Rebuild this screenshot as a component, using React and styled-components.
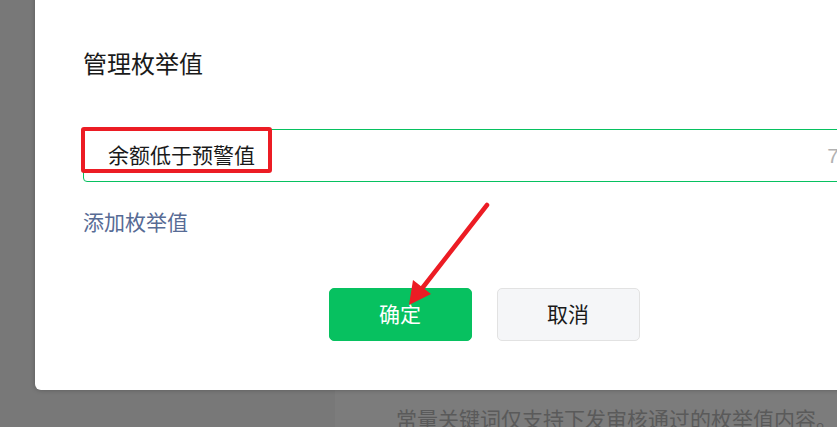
import styled, { createGlobalStyle } from "styled-components";

const GlobalStyle = createGlobalStyle`
  html, body {
    margin: 0;
    padding: 0;
    background: #787878;
  }
  * {
    box-sizing: border-box;
  }
  body {
    font-family: "Noto Sans CJK SC", "Noto Sans", sans-serif;
  }
`;

export default function App() {
  return (
    <>
      <GlobalStyle />
      <Page>
        <Sidebar />
        <Main>
          <Note>常量关键词仅支持下发审核通过的枚举值内容。</Note>
        </Main>

        <Modal role="dialog">
          <Title>管理枚举值</Title>
          <InputWrap>
            <InputText>余额低于预警值</InputText>
            <Counter>7/20</Counter>
            <Highlight />
          </InputWrap>
          <AddLink>添加枚举值</AddLink>
          <Actions>
            <Button $primary>确定</Button>
            <Button>取消</Button>
          </Actions>
        </Modal>

        <Arrow width="837" height="427" viewBox="0 0 837 427">
          <line
            x1="487"
            y1="205"
            x2="420"
            y2="291"
            stroke="#ec1c24"
            strokeWidth="4.5"
            strokeLinecap="round"
          />
          <polygon points="409,305 413,280 431,294" fill="#ec1c24" />
        </Arrow>
      </Page>
    </>
  );
}

const Page = styled.div`
  position: relative;
  display: grid;
  grid-template-columns: 335px 1fr;
  width: 837px;
  height: 427px;
  overflow: hidden;
`;

const Sidebar = styled.div`
  background: #787878;
`;

const Main = styled.div`
  background: #7c7c7c;
  padding: 403px 0 0 61px;
`;

const Note = styled.p`
  margin: 0;
  font-size: 21px;
  line-height: 30px;
  white-space: nowrap;
  color: #5a5a5a;
`;

const Modal = styled.div`
  position: absolute;
  top: -24px;
  left: 35px;
  width: 900px;
  display: flex;
  flex-direction: column;
  padding: 70px 48px 49px;
  background: #fff;
  border-radius: 6px;
  box-shadow: 0 0 5px rgba(0, 0, 0, 0.25);
`;

const Title = styled.h2`
  margin: 0;
  font-size: 24px;
  font-weight: 400;
  line-height: 34px;
  color: #1a1a1a;
`;

const InputWrap = styled.div`
  position: relative;
  display: flex;
  align-items: center;
  justify-content: space-between;
  height: 53px;
  margin-top: 49px;
  padding: 0 18px 0 24px;
  border: 1px solid #07c160;
  border-radius: 4px;
`;

const InputText = styled.span`
  font-size: 21px;
  color: #1a1a1a;
  margin-top: -4px;
`;

const Counter = styled.span`
  font-family: "Liberation Sans", "Noto Sans", sans-serif;
  font-size: 21px;
  color: #b2b2b2;
`;

const Highlight = styled.div`
  position: absolute;
  left: -3px;
  top: -3px;
  width: 191px;
  height: 46px;
  border: 4px solid #ec1c24;
  border-radius: 3px;
`;

const AddLink = styled.a`
  align-self: flex-start;
  margin-top: 24px;
  font-size: 21px;
  line-height: 30px;
  color: #576b95;
  cursor: pointer;
`;

const Actions = styled.div`
  display: flex;
  justify-content: center;
  gap: 25px;
  margin-top: 52px;
  margin-left: -2px;
`;

const Button = styled.button`
  width: 143px;
  height: 53px;
  padding: 0 0 3px;
  border-radius: 5px;
  font-family: inherit;
  font-size: 21px;
  border: 1px solid ${({ $primary }) => ($primary ? "#07c160" : "#e2e2e2")};
  background: ${({ $primary }) => ($primary ? "#07c160" : "#f5f6f8")};
  color: ${({ $primary }) => ($primary ? "#fff" : "#1a1a1a")};
`;

const Arrow = styled.svg`
  position: absolute;
  left: 0;
  top: 0;
  pointer-events: none;
`;
